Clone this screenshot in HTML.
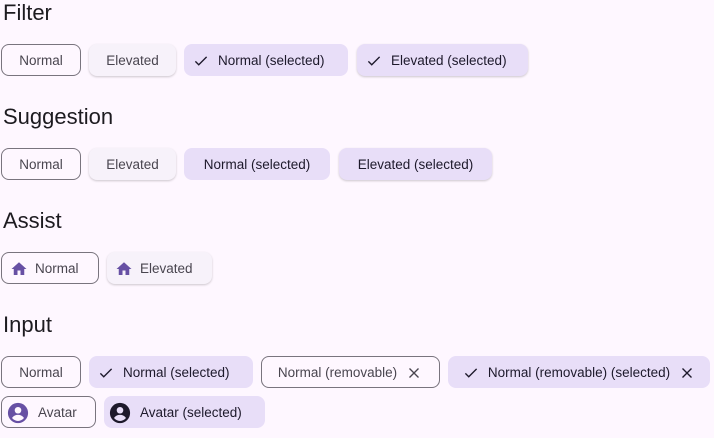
<!DOCTYPE html><html><head><style>
body{margin:0;background:#fef7ff;width:714px;height:438px;position:relative;overflow:hidden;font-family:"Liberation Sans",sans-serif}
h{position:absolute;left:3px;font-size:22px;color:#1d1b20;line-height:26px}
.c{position:absolute;height:32px;box-sizing:border-box;border-radius:8px;display:flex;align-items:center;justify-content:center;font-size:13.5px;color:#49454f;white-space:nowrap;padding-top:1px}
.o{border:1px solid #79747e;background:#fef7ff}
.e{background:#f7f2fa;box-shadow:0 1px 2px rgba(0,0,0,.2)}
.s{background:#e8def8;color:#1d192b}
.se{box-shadow:0 1px 2px rgba(0,0,0,.2)}
.l{justify-content:flex-start;padding-left:8px}
svg{flex:none}
</style></head><body>
<h style="top:0">Filter</h>
<div class="c o" style="left:1px;top:44px;width:80px">Normal</div>
<div class="c e" style="left:89px;top:44px;width:87px">Elevated</div>
<div class="c s l" style="left:184px;top:44px;width:164px"><svg width="18" height="18" viewBox="0 0 24 24" style="margin-right:8px"><path d="M4.5 12.5l4.5 4.5L19.5 6.5" stroke="#1d192b" stroke-width="1.8" fill="none"/></svg>Normal (selected)</div>
<div class="c s se l" style="left:357px;top:44px;width:171px"><svg width="18" height="18" viewBox="0 0 24 24" style="margin-right:8px"><path d="M4.5 12.5l4.5 4.5L19.5 6.5" stroke="#1d192b" stroke-width="1.8" fill="none"/></svg>Elevated (selected)</div>

<h style="top:104px">Suggestion</h>
<div class="c o" style="left:1px;top:148px;width:80px">Normal</div>
<div class="c e" style="left:89px;top:148px;width:87px">Elevated</div>
<div class="c s" style="left:184px;top:148px;width:146px">Normal (selected)</div>
<div class="c s se" style="left:339px;top:148px;width:153px">Elevated (selected)</div>

<h style="top:208px">Assist</h>
<div class="c o l" style="left:1px;top:252px;width:98px"><svg width="18" height="18" viewBox="0 0 24 24" style="margin-right:7px"><path d="M10 20v-6h4v6h5v-8h3L12 3 2 12h3v8z" fill="#6750a4"/></svg>Normal</div>
<div class="c e l" style="left:107px;top:252px;width:105px"><svg width="18" height="18" viewBox="0 0 24 24" style="margin-right:7px"><path d="M10 20v-6h4v6h5v-8h3L12 3 2 12h3v8z" fill="#6750a4"/></svg>Elevated</div>

<h style="top:312px">Input</h>
<div class="c o" style="left:1px;top:356px;width:80px">Normal</div>
<div class="c s l" style="left:89px;top:356px;width:164px"><svg width="18" height="18" viewBox="0 0 24 24" style="margin-right:8px"><path d="M4.5 12.5l4.5 4.5L19.5 6.5" stroke="#1d192b" stroke-width="1.8" fill="none"/></svg>Normal (selected)</div>
<div class="c o" style="left:261px;top:356px;width:179px">Normal (removable)<svg width="18" height="18" viewBox="0 0 24 24" style="margin-left:8px"><path d="M6 6l12 12M18 6L6 18" stroke="#49454f" stroke-width="1.8"/></svg></div>
<div class="c s" style="left:448px;top:356px;width:262px"><svg width="18" height="18" viewBox="0 0 24 24" style="margin-right:8px"><path d="M4.5 12.5l4.5 4.5L19.5 6.5" stroke="#1d192b" stroke-width="1.8" fill="none"/></svg>Normal (removable) (selected)<svg width="18" height="18" viewBox="0 0 24 24" style="margin-left:8px"><path d="M6 6l12 12M18 6L6 18" stroke="#1d192b" stroke-width="1.8"/></svg></div>
<div class="c o" style="left:1px;top:396px;width:95px;justify-content:flex-start;padding-left:5px"><svg width="22" height="22" viewBox="0 0 24 24" style="margin-right:9px"><circle cx="12" cy="12" r="11" fill="#6750a4"/><circle cx="12" cy="9" r="3.6" fill="#fef7ff"/><path d="M5.5 17.5c1.5-2.5 4-3.5 6.5-3.5s5 1 6.5 3.5c-1.6 2-4 3.2-6.5 3.2s-4.9-1.2-6.5-3.2z" fill="#fef7ff"/></svg>Avatar</div>
<div class="c s" style="left:104px;top:396px;width:161px;justify-content:flex-start;padding-left:5px"><svg width="22" height="22" viewBox="0 0 24 24" style="margin-right:9px"><circle cx="12" cy="12" r="11" fill="#1d192b"/><circle cx="12" cy="9" r="3.6" fill="#e8def8"/><path d="M5.5 17.5c1.5-2.5 4-3.5 6.5-3.5s5 1 6.5 3.5c-1.6 2-4 3.2-6.5 3.2s-4.9-1.2-6.5-3.2z" fill="#e8def8"/></svg>Avatar (selected)</div>
</body></html>
